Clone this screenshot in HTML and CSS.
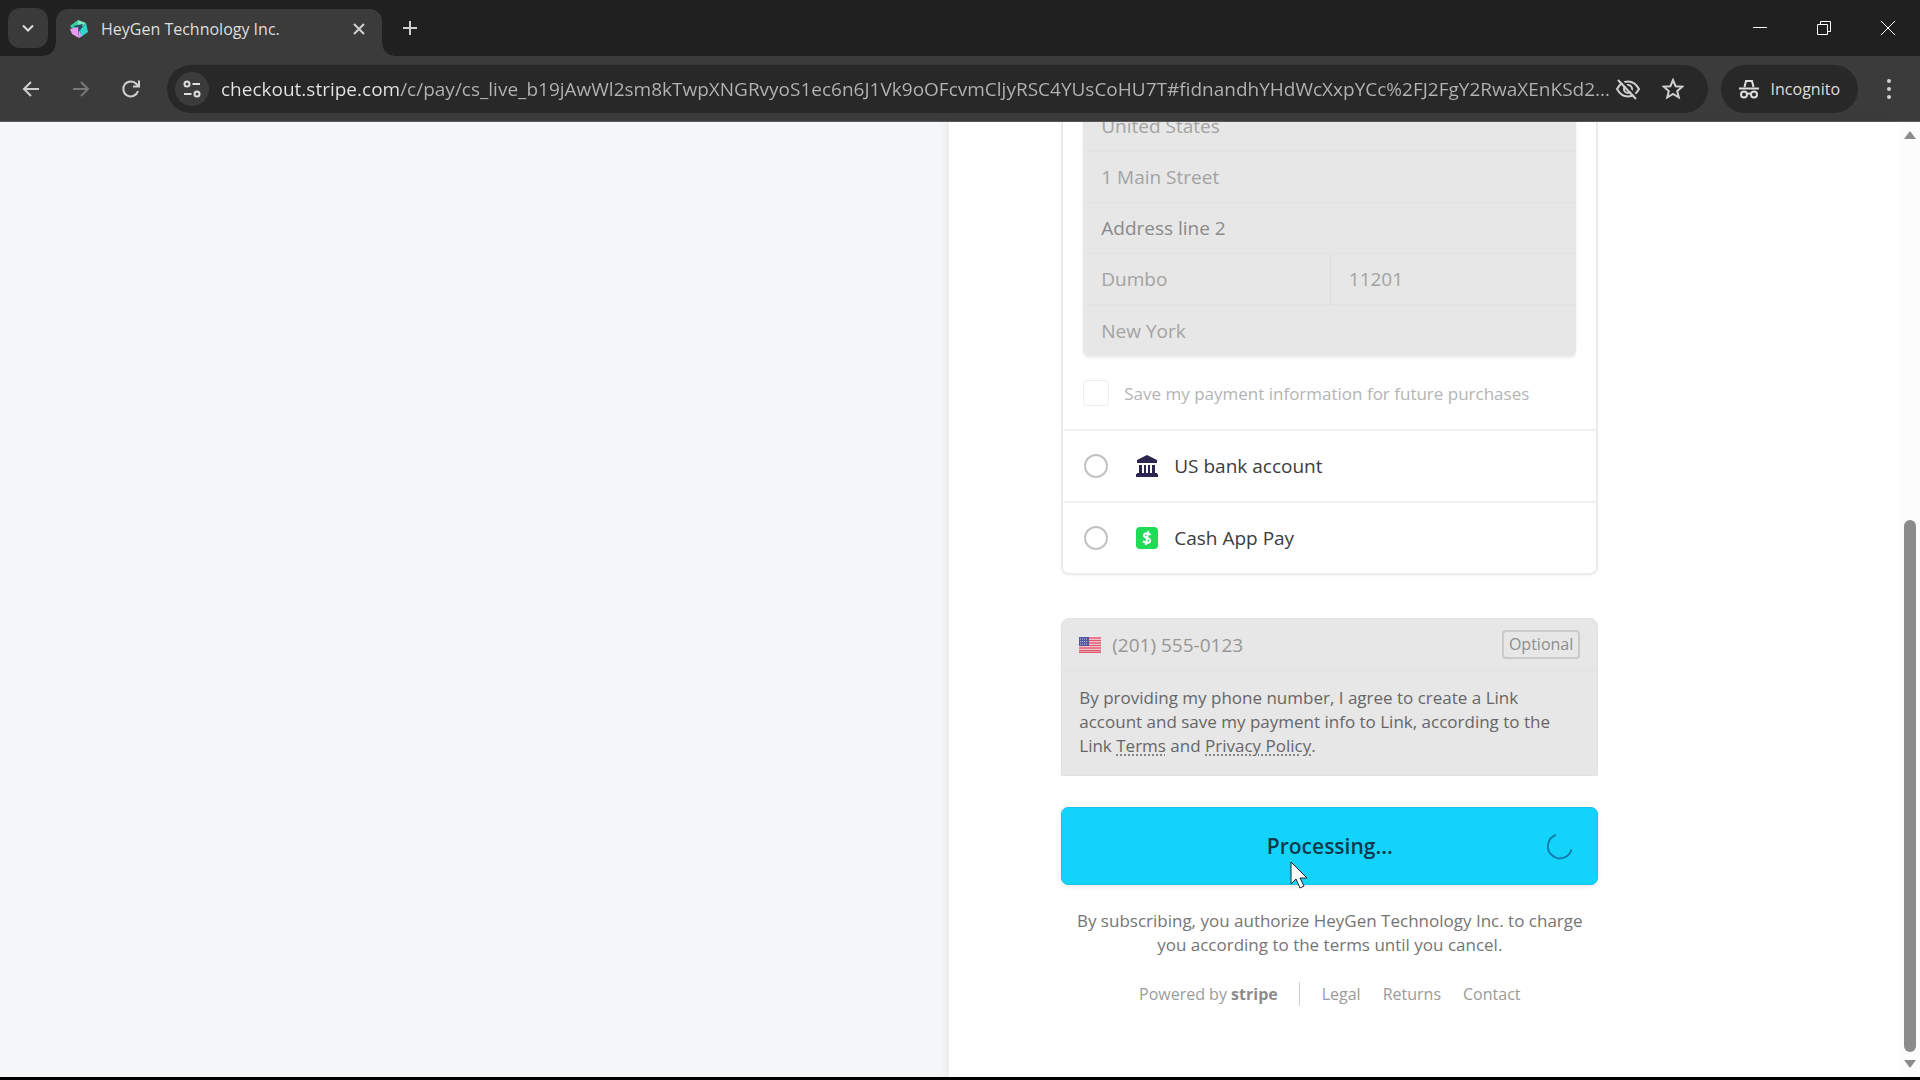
FILE: index.html
```html
<!DOCTYPE html>
<html lang="en">
<head>
    <meta charset="UTF-8">
    <meta name="viewport" content="width=device-width, initial-scale=1.0">
    <title>HeyGen Technology Inc.</title>
    <link rel="stylesheet" href="styles.css">
</head>
<body>
    <!-- Tab strip -->
    <header class="tab-strip">
        <button type="button" class="tab-search" aria-label="Search tabs">
            <svg width="14" height="14" viewBox="0 0 14 14"><path d="M2 4.5l5 5 5-5"/></svg>
        </button>
        <div class="tab">
            <svg class="favicon" width="18" height="18" viewBox="0 0 18 18">
                <path fill="#35d3a4" d="M0 6L8 0v7L3 9z"/>
                <path fill="#7be8c0" d="M8 0l8 3-3 3-5 1z"/>
                <path fill="#2fd6d0" d="M16 3l2 9-7 5-1-7z"/>
                <path fill="#24506a" d="M3 6l5-1 5-1-3 6-1 4-1-5z"/>
                <path fill="#e79bf0" d="M0 9l8-2 1 11-7-4z"/>
                <path fill="#b9a4f5" d="M9 10l3 6-3 2z"/>
            </svg>
            <span class="tab-title">HeyGen Technology Inc.</span>
            <button type="button" class="icon-btn" aria-label="Close tab">
                <svg width="12" height="12" viewBox="0 0 12 12"><path d="M1 1l10 10M11 1L1 11"/></svg>
            </button>
        </div>
        <button type="button" class="icon-btn new-tab" aria-label="New tab">
            <svg width="16" height="16" viewBox="0 0 16 16"><path d="M8 1v14M1 8h14"/></svg>
        </button>
        <div class="window-controls">
            <button type="button" class="icon-btn" aria-label="Minimize">
                <svg width="16" height="16" viewBox="0 0 16 16"><path d="M1 7.500h14"/></svg>
            </button>
            <button type="button" class="icon-btn" aria-label="Restore">
                <svg width="16" height="16" viewBox="0 0 16 16"><path d="M1.500 4.500h10v10h-10zM4.500 4.500v-3h10v10h-3"/></svg>
            </button>
            <button type="button" class="icon-btn" aria-label="Close window">
                <svg width="16" height="16" viewBox="0 0 16 16"><path d="M1 1l14 14M15 1L1 15"/></svg>
            </button>
        </div>
    </header>

    <!-- Toolbar -->
    <nav class="toolbar">
        <button type="button" class="icon-btn" aria-label="Back">
            <svg width="20" height="20" viewBox="0 0 20 20"><path d="M18 10H3M10 3l-7 7 7 7"/></svg>
        </button>
        <button type="button" class="icon-btn" aria-label="Forward" disabled>
            <svg width="20" height="20" viewBox="0 0 20 20"><path d="M2 10h15M10 3l7 7-7 7"/></svg>
        </button>
        <button type="button" class="icon-btn" aria-label="Reload">
            <svg width="20" height="20" viewBox="0 0 20 20"><path d="M17 12a7.500 7.500 0 1 1-1.500-7L18 7.500M18 1.500v6h-6"/></svg>
        </button>
        <div class="address-bar">
            <button type="button" class="site-info" aria-label="View site information">
                <svg width="18" height="18" viewBox="0 0 18 18"><circle cx="4" cy="4" r="2.500"/><path d="M9.500 4H17M1 14h7.500"/><circle cx="14" cy="14" r="2.500"/></svg>
            </button>
            <input type="text" class="url" aria-label="Address" value="checkout.stripe.com/c/pay/cs_live_b19jAwWl2sm8kTwpXNGRvyoS1ec6n6J1Vk9oOFcvmCljyRSC4YUsCoHU7T#fidnandhYHdWcXxpYCc%2FJ2FgY2RwaXEnKSd2...">
            <button type="button" class="icon-btn" aria-label="Third-party cookies blocked">
                <svg width="26" height="22" viewBox="0 0 26 22"><path d="M2 11c3-5.500 7-7.500 11-7.500s8 2 11 7.500c-3 5.500-7 7.500-11 7.500S5 16.500 2 11z"/><circle cx="13" cy="11" r="4"/><path class="slash-gap" d="M5 1l18 19"/><path d="M3 2l18 19"/></svg>
            </button>
            <button type="button" class="icon-btn" aria-label="Bookmark this tab">
                <svg width="22" height="22" viewBox="0 0 22 22"><path d="M11 2l2.600 6.200 6.700.5-5.100 4.300 1.600 6.500L11 16l-5.800 3.500L6.800 13 1.700 8.700l6.700-.5z"/></svg>
            </button>
        </div>
        <button type="button" class="incognito">
            <svg width="20" height="20" viewBox="0 0 20 20"><path d="M5.500 8L7 2h6l1.500 6M0 9.500h20"/><circle cx="5" cy="15.500" r="3"/><circle cx="15" cy="15.500" r="3"/><path d="M8 15q2-1 4 0"/></svg>
            <span>Incognito</span>
        </button>
        <button type="button" class="icon-btn menu" aria-label="Menu">
            <svg width="6" height="20" viewBox="0 0 6 20"><circle cx="3" cy="2" r="2"/><circle cx="3" cy="10" r="2"/><circle cx="3" cy="18" r="2"/></svg>
        </button>
    </nav>

    <div class="viewport">
        <aside class="summary"></aside>

        <main class="payment">
            <form class="checkout">
                <section class="methods">
                    <div class="card-details">
                        <div class="address">
                            <select class="field" aria-label="Country" disabled>
                                <option>United States</option>
                            </select>
                            <input class="field" type="text" aria-label="Address line 1" value="1 Main Street" disabled>
                            <input class="field" type="text" aria-label="Address line 2" placeholder="Address line 2" disabled>
                            <div class="field-pair">
                                <input class="field" type="text" aria-label="City" value="Dumbo" disabled>
                                <input class="field" type="text" aria-label="ZIP code" value="11201" disabled>
                            </div>
                            <select class="field" aria-label="State" disabled>
                                <option>New York</option>
                            </select>
                        </div>
                        <label class="save-info">
                            <input type="checkbox" disabled>
                            <span>Save my payment information for future purchases</span>
                        </label>
                    </div>
                    <label class="method">
                        <input type="radio" name="method" value="bank">
                        <svg width="22" height="22" viewBox="0 0 22 22" fill="#2a2650"><path d="M11 0l10 5v3H1V5zM3 10h3v8H3zM8 10h2v8H8zM12 10h2v8h-2zM16 10h3v8h-3zM1 18h20v1H1zM0 19h22v3H0z"/></svg>
                        <span>US bank account</span>
                    </label>
                    <label class="method">
                        <input type="radio" name="method" value="cashapp">
                        <svg width="22" height="22" viewBox="0 0 22 22"><rect width="22" height="22" rx="4" fill="#1fdb55"/><path d="M14.500 8Q13 6.300 11 6.300c-2 0-3 .9-3 2.200 0 3.200 6.200 1.600 6.200 5 0 1.500-1.400 2.400-3.300 2.400-1.700 0-3-.6-4-1.700M12.200 4l-2.400 14" fill="none" stroke="#fff" stroke-width="2"/></svg>
                        <span>Cash App Pay</span>
                    </label>
                </section>

                <section class="link-signup">
                    <div class="phone">
                        <svg width="22" height="16" viewBox="0 0 22 16">
                            <rect width="22" height="16" fill="#f3e8ec"/>
                            <path d="M0 1h22M0 3.500h22M0 6h22M0 8.500h22M0 11h22M0 13.500h22M0 15.500h22" stroke="#e0566b" stroke-width="1.300"/>
                            <rect width="10" height="9" fill="#54579c"/>
                            <path d="M1 2h8M1 4.500h8M1 7h8" stroke="#c5c6e2" stroke-dasharray="1 1"/>
                        </svg>
                        <input type="tel" aria-label="Phone number" placeholder="(201) 555-0123" disabled>
                        <span class="optional">Optional</span>
                    </div>
                    <p class="terms">By providing my phone number, I agree to create a Link account and save my payment info to Link, according to the Link <a href="#">Terms</a> and <a href="#">Privacy Policy</a>.</p>
                </section>

                <button type="submit" class="submit">
                    <span>Processing...</span>
                    <svg class="spinner" width="28" height="28" viewBox="0 0 28 28"><path d="M10 3a12 12 0 1 0 15.500 14.500"/></svg>
                    <svg class="cursor" width="18" height="29" viewBox="0 0 18 29"><path d="M1 1v22l5-5 4 9 4-2-4-8h7z"/></svg>
                </button>

                <p class="authorize">By subscribing, you authorize HeyGen Technology Inc. to charge you according to the terms until you cancel.</p>
            </form>

            <footer class="footer">
                <a href="#" class="powered">Powered by <b>stripe</b></a>
                <div class="footer-links">
                    <a href="#">Legal</a>
                    <a href="#">Returns</a>
                    <a href="#">Contact</a>
                </div>
            </footer>
        </main>

        <div class="scrollbar">
            <svg width="12" height="8" viewBox="0 0 12 8"><path d="M6 0l6 8H0z"/></svg>
            <div class="thumb"></div>
            <svg width="12" height="8" viewBox="0 0 12 8"><path d="M0 0h12L6 8z"/></svg>
        </div>
    </div>
</body>
</html>
```

FILE: styles.css
```css
* {
    box-sizing: border-box;
}

body {
    margin: 0;
    height: 100vh;
    display: flex;
    flex-direction: column;
    overflow: hidden;
    background-color: #3b3b3b;
    border-bottom: 3px solid #000;
    font-family: "Open Sans", "Noto Sans", sans-serif;
    font-size: 16px;
}

button, input, select {
    font-family: inherit;
    font-size: inherit;
    margin: 0;
}

svg {
    display: block;
    flex-shrink: 0;
}

/* Browser chrome */
.tab-strip {
    display: flex;
    align-items: center;
    height: 56px;
    flex-shrink: 0;
    padding-left: 8px;
    background-color: #202020;
    color: #dedede;
}

.tab-strip svg:not(.favicon),
.toolbar svg {
    fill: none;
    stroke: currentColor;
    stroke-width: 2;
}

.tab-search {
    width: 40px;
    height: 40px;
    padding: 0;
    display: flex;
    align-items: center;
    justify-content: center;
    border: none;
    border-radius: 12px;
    background-color: #3a3a3a;
    color: inherit;
}

.tab {
    position: relative;
    align-self: flex-end;
    display: flex;
    align-items: center;
    gap: 13px;
    width: 326px;
    height: 47px;
    margin-left: 8px;
    padding: 0 9px 7px 14px;
    border-radius: 12px 12px 0 0;
    background-color: #3b3b3b;
}

/* flared corners at the foot of the tab */
.tab::before,
.tab::after {
    content: "";
    position: absolute;
    bottom: 0;
    width: 12px;
    height: 12px;
}

.tab::before {
    left: -12px;
    background: radial-gradient(circle at 0 0, transparent 11px, #3b3b3b 12px);
}

.tab::after {
    right: -12px;
    background: radial-gradient(circle at 100% 0, transparent 11px, #3b3b3b 12px);
}

.tab-title {
    flex: 1;
}

.icon-btn {
    display: flex;
    align-items: center;
    justify-content: center;
    flex-shrink: 0;
    width: 28px;
    height: 28px;
    padding: 0;
    border: none;
    background: none;
    color: #cfcfcf;
}

.icon-btn:disabled {
    color: #777;
}

.new-tab {
    margin-left: 14px;
}

.window-controls {
    display: flex;
    gap: 36px;
    margin-left: auto;
    padding-right: 18px;
}

.tab-strip .window-controls svg {
    stroke-width: 1;
    stroke: #fff;
}

.toolbar {
    display: flex;
    align-items: center;
    height: 66px;
    flex-shrink: 0;
    padding: 0 17px;
    gap: 22px;
    border-bottom: 1px solid #5a5a5a;
}

.address-bar {
    flex: 1;
    min-width: 0;
    display: flex;
    align-items: center;
    height: 48px;
    padding: 0 21px 0 8px;
    gap: 17px;
    margin-right: -9px;
    border-radius: 24px;
    background-color: #282828;
}

.site-info {
    display: flex;
    align-items: center;
    justify-content: center;
    flex-shrink: 0;
    width: 34px;
    height: 34px;
    padding: 0;
    border: none;
    border-radius: 50%;
    background-color: #3b3b3b;
    color: #dedede;
}

.url {
    flex: 1;
    min-width: 0;
    margin: 0 -15px 0 -5px;
    padding: 0;
    border: none;
    outline: none;
    font-size: 19px;
    /* host name brighter than the path */
    background: linear-gradient(90deg, #e6e6e6 180px, #b4b4b4 180px);
    -webkit-background-clip: text;
    background-clip: text;
    -webkit-text-fill-color: transparent;
}

.toolbar .slash-gap {
    stroke: #282828;
}

.incognito {
    display: flex;
    align-items: center;
    gap: 12px;
    height: 48px;
    padding: 0 18px;
    border: none;
    border-radius: 24px;
    background-color: #282828;
    color: #dedede;
}

.menu {
    margin-left: -5px;
}

.toolbar .menu svg {
    fill: currentColor;
    stroke: none;
}

/* Page */
.viewport {
    flex: 1;
    min-height: 0;
    display: flex;
    background-color: #fff;
}

.summary {
    width: 50%;
    background-color: #f5f6f8;
}

.payment {
    width: 50%;
    display: flex;
    flex-direction: column;
    justify-content: flex-end;
    overflow: hidden;
    padding: 0 20px 71px 112px;
    box-shadow: -3px 0 8px rgba(0, 0, 0, 0.06);
    background-color: #fff;
}

.checkout,
.footer {
    width: 100%;
    max-width: 537px;
}

.methods {
    border: 2px solid #ececec;
    border-radius: 8px;
    box-shadow: 0 1px 3px rgba(0, 0, 0, 0.04);
}

.card-details {
    padding: 20px;
}

.address {
    border-radius: 6px;
    overflow: hidden;
    background-color: #e7e7e7;
    box-shadow: 0 2px 3px rgba(0, 0, 0, 0.08);
}

.field {
    display: block;
    width: 100%;
    height: 51px;
    padding: 0 18px;
    border: none;
    border-bottom: 1px solid #e3e3e3;
    border-radius: 0;
    background: none;
    appearance: none;
    color: #a3a3a3;
    font-size: 19px;
    opacity: 1;
}

.field::placeholder {
    color: #8a8a8a;
}

.address > .field:last-child {
    border-bottom: none;
}

.field-pair {
    display: grid;
    grid-template-columns: 1fr 1fr;
}

.field-pair .field + .field {
    border-left: 1px solid #dedede;
}

.save-info {
    display: flex;
    align-items: center;
    gap: 15px;
    height: 26px;
    margin: 24px 0 3px;
    color: #b4b4b4;
    font-size: 17px;
}

.save-info input {
    appearance: none;
    width: 26px;
    height: 26px;
    border: 1px solid #ededed;
    border-radius: 4px;
    background-color: #fff;
}

.method {
    display: flex;
    align-items: center;
    height: 72px;
    padding: 0 21px;
    border-top: 2px solid #f0f0f0;
    color: #3c3c3c;
    font-size: 19px;
}

.method input {
    appearance: none;
    width: 24px;
    height: 24px;
    margin-right: 28px;
    border: 2px solid #c2c2c2;
    border-radius: 50%;
    background-color: #fff;
}

.method span {
    margin-left: 16px;
}

.link-signup {
    margin-top: 43px;
    border: 1px solid #e2e2e2;
    border-radius: 8px 8px 0 0;
    background-color: #e7e7e7;
}

.phone {
    display: flex;
    align-items: center;
    height: 52px;
    padding: 0 17px;
    border-bottom: 1px solid #e1e1e1;
}

.phone input {
    flex: 1;
    min-width: 0;
    padding: 0 11px;
    border: none;
    background: none;
    font-size: 19px;
}

.phone input::placeholder {
    color: #969696;
}

.optional {
    padding: 2px 5px;
    border: 2px solid #cacaca;
    border-radius: 4px;
    color: #8e8e8e;
    line-height: 21px;
}

.terms {
    margin: 0;
    padding: 15px 28px 17px 17px;
    color: #666;
    font-size: 17px;
    line-height: 24px;
}

.terms a {
    color: inherit;
    text-decoration: underline dotted;
    text-underline-offset: 3px;
}

.submit {
    position: relative;
    display: block;
    width: 100%;
    height: 78px;
    margin-top: 31px;
    padding: 0;
    border: 1px solid #1bc3ea;
    border-radius: 7px;
    background-color: #14d3fb;
    box-shadow: 0 2px 5px rgba(0, 0, 0, 0.08);
    color: #0e3a4e;
    font-size: 21px;
    font-weight: 600;
}

.spinner {
    position: absolute;
    top: 24px;
    right: 23px;
    fill: none;
    stroke: #117fae;
    stroke-width: 2;
}

.cursor {
    position: absolute;
    top: 53px;
    left: 228px;
    fill: #fff;
    stroke: #222;
}

.authorize {
    margin: 24px 0 0;
    padding: 0 8px;
    color: #757575;
    font-size: 17px;
    line-height: 24px;
    text-align: center;
}

.footer {
    display: flex;
    align-items: center;
    justify-content: center;
    margin-top: 25px;
    line-height: 24px;
    color: #9b9b9b;
}

.footer a {
    color: inherit;
    text-decoration: none;
}

.powered b {
    color: #8c8c8c;
}

.footer-links {
    display: flex;
    gap: 22px;
    margin-left: 21px;
    padding-left: 22px;
    border-left: 1px solid #d0d0d0;
}

.scrollbar {
    display: flex;
    flex-direction: column;
    align-items: center;
    flex-shrink: 0;
    width: 20px;
    padding: 9px 0;
    background-color: #fcfcfc;
}

.scrollbar svg {
    fill: #8b8b8b;
}

.thumb {
    width: 12px;
    height: 532px;
    margin: auto 0 8px;
    border-radius: 6px;
    background-color: #8b8b8b;
}
```
